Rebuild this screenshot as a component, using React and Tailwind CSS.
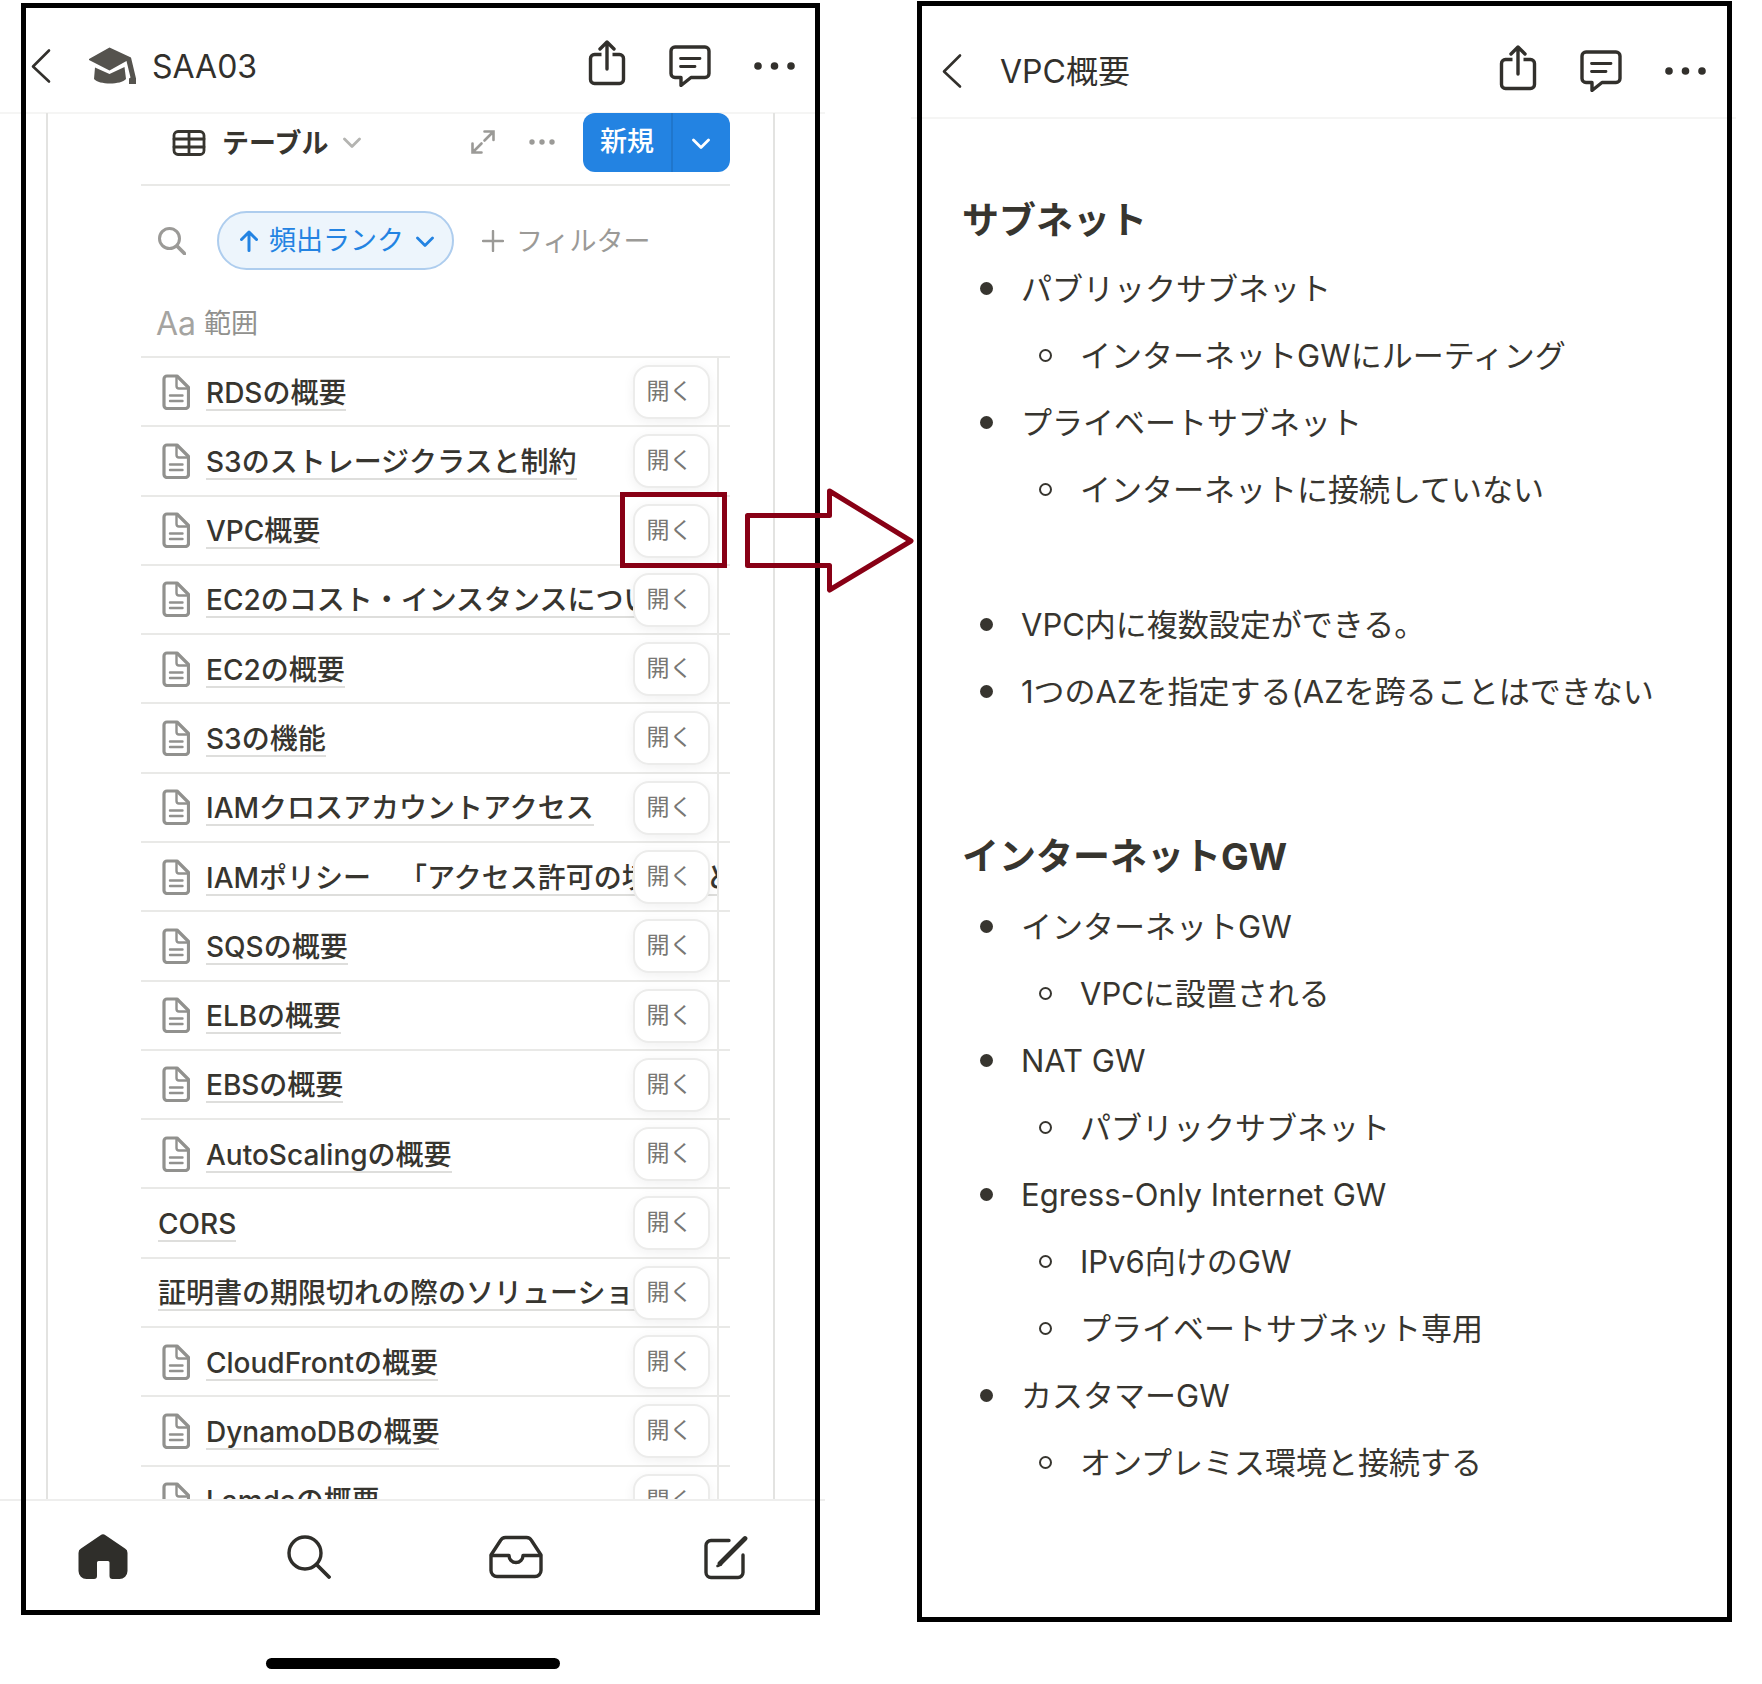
const font = "font-['Inter','Noto_Sans_CJK_JP',sans-serif]";

const rows = [
  { title: "RDSの概要" },
  { title: "S3のストレージクラスと制約" },
  { title: "VPC概要", marked: true },
  { title: "EC2のコスト・インスタンスについて" },
  { title: "EC2の概要" },
  { title: "S3の機能" },
  { title: "IAMクロスアカウントアクセス" },
  { title: "IAMポリシー　「アクセス許可の境界」とは" },
  { title: "SQSの概要" },
  { title: "ELBの概要" },
  { title: "EBSの概要" },
  { title: "AutoScalingの概要" },
  { title: "CORS", plain: true },
  { title: "証明書の期限切れの際のソリューション", plain: true },
  { title: "CloudFrontの概要" },
  { title: "DynamoDBの概要" },
  { title: "Lamdaの概要" },
];

const subnet = [
  { text: "パブリックサブネット", children: ["インターネットGWにルーティング"] },
  { text: "プライベートサブネット", children: ["インターネットに接続していない"] },
];

const subnetNotes = [
  { text: "VPC内に複数設定ができる。" },
  { text: "1つのAZを指定する(AZを跨ることはできない" },
];

const gateways = [
  { text: "インターネットGW", children: ["VPCに設置される"] },
  { text: "NAT GW", children: ["パブリックサブネット"] },
  { text: "Egress-Only Internet GW", children: ["IPv6向けのGW", "プライベートサブネット専用"] },
  { text: "カスタマーGW", children: ["オンプレミス環境と接続する"] },
];

const line = {
  fill: "none",
  stroke: "currentColor",
  strokeLinecap: "round",
  strokeLinejoin: "round",
};

function BackIcon() {
  return (
    <svg width="20" height="36" viewBox="0 0 20 36" strokeWidth="2.6" {...line}>
      <path d="M18 2.500L2 18.500l16 15" />
    </svg>
  );
}

function CapIcon() {
  return (
    <svg width="48" height="38" viewBox="0 0 48 38" fill="#55534e">
      <path d="M20.500 0.500L42 10.500 47 31.500V37H40V31.500L41.500 30.500 37.500 14 20.500 23.500 0 13V12z" />
      <path d="M6 20.500L20.500 27 35.500 20 37 32C32 38 10 38 5 32z" />
    </svg>
  );
}

function ShareIcon() {
  return (
    <svg width="38" height="46" viewBox="0 0 38 46" strokeWidth="3.4" {...line}>
      <path d="M13.500 14.500H6.500a4 4 0 0 0-4 4V39.500a4 4 0 0 0 4 4h25a4 4 0 0 0 4-4V18.500a4 4 0 0 0-4-4H24.500" strokeLinecap="butt" />
      <path d="M19 29V2.500M12 9l7-7 7 7" />
    </svg>
  );
}

function CommentIcon() {
  return (
    <svg width="42" height="42" viewBox="0 0 42 42" strokeWidth="3.4" {...line}>
      <path d="M6 2H36a4 4 0 0 1 4 4V28.500a4 4 0 0 1-4 4H22l-10 8V32.500H6a4 4 0 0 1-4-4V6a4 4 0 0 1 4-4z" />
      <path d="M11.500 13.500h19.500M11.500 21.500h14.500" strokeWidth="2.8" />
    </svg>
  );
}

function DotsIcon() {
  return (
    <svg width="42" height="8" viewBox="0 0 42 8" fill="currentColor">
      <circle cx="4" cy="4" r="3.8" />
      <circle cx="20.500" cy="4" r="3.8" />
      <circle cx="37" cy="4" r="3.8" />
    </svg>
  );
}

function TableIcon() {
  return (
    <svg width="34" height="26" viewBox="0 0 34 26" strokeWidth="2.8" {...line}>
      <rect x="2" y="1.500" width="30" height="23" rx="4" />
      <path d="M2 9h30M2 17h30M17 2v22" />
    </svg>
  );
}

function ChevronDown() {
  return (
    <svg width="18" height="12" viewBox="0 0 18 12" strokeWidth="2.8" {...line}>
      <path d="M1.500 2L9 9.500 16.500 2" />
    </svg>
  );
}

function ExpandIcon() {
  return (
    <svg width="24" height="24" viewBox="0 0 24 24" strokeWidth="2.6" {...line}>
      <path d="M13.500 10.500L22 2M13.500 1.500H22.500V10M10.500 13.500L2 22M1.500 13.500V22.500H10.500" strokeLinejoin="miter" />
    </svg>
  );
}

function SmallDots() {
  return (
    <svg width="26" height="6" viewBox="0 0 26 6" fill="currentColor">
      <circle cx="3" cy="3" r="2.700" />
      <circle cx="13" cy="3" r="2.700" />
      <circle cx="23" cy="3" r="2.700" />
    </svg>
  );
}

function ThinSearch() {
  return (
    <svg width="28" height="28" viewBox="0 0 28 28" strokeWidth="3" {...line}>
      <circle cx="11.500" cy="11.500" r="10" />
      <path d="M19 19l7.500 7.500" strokeWidth="3.8" />
    </svg>
  );
}

function ArrowUp() {
  return (
    <svg width="18" height="22" viewBox="0 0 18 22" strokeWidth="3" {...line}>
      <path d="M9 20.500V2M1.500 9.500L9 2l7.500 7.500" />
    </svg>
  );
}

function PlusIcon() {
  return (
    <svg width="22" height="22" viewBox="0 0 22 22" strokeWidth="2.4" {...line}>
      <path d="M11 1v20M1 11h20" />
    </svg>
  );
}

function PageIcon() {
  return (
    <svg className="shrink-0 text-[#91918e]" width="28" height="36" viewBox="0 0 28 36" strokeWidth="3.2" {...line}>
      <path d="M5 2H15L26.500 13.500V31.500a3 3 0 0 1-3 3H5a3 3 0 0 1-3-3V5a3 3 0 0 1 3-3z" />
      <path d="M14.500 2.500V12a2.500 2.500 0 0 0 2.500 2.500h9M8 21.500h12.500M8 27h12.500" strokeWidth="2.4" />
    </svg>
  );
}

function HomeIcon() {
  return (
    <svg width="50" height="48" viewBox="0 0 50 48" fill="currentColor">
      <path d="M22.500 2.200a4 4 0 0 1 5 0L47 15.500a5 5 0 0 1 2.500 4.500V38a8 8 0 0 1-8 8H34.500a3 3 0 0 1-3-3V29.500a1.500 1.500 0 0 0-1.500-1.500H20.500a1.500 1.500 0 0 0-1.500 1.500V43a3 3 0 0 1-3 3H8.500a8 8 0 0 1-8-8V20a5 5 0 0 1 2.500-4.500z" />
    </svg>
  );
}

function SearchIcon() {
  return (
    <svg width="44" height="44" viewBox="0 0 44 44" strokeWidth="3.4" {...line}>
      <circle cx="18" cy="18" r="16" />
      <path d="M29.500 29.500L42 42" strokeWidth="3.8" />
    </svg>
  );
}

function InboxIcon() {
  return (
    <svg width="54" height="44" viewBox="0 0 54 44" strokeWidth="3.4" {...line}>
      <path d="M2 20L11.500 5.500a6 6 0 0 1 5-3H37.500a6 6 0 0 1 5 3L52 20V35.500a6 6 0 0 1-6 6H8a6 6 0 0 1-6-6z" />
      <path d="M2.500 20.500H20a7 7 0 0 0 14 0H51.500" />
    </svg>
  );
}

function ComposeIcon() {
  return (
    <svg width="52" height="46" viewBox="0 0 52 46" strokeWidth="3.4" {...line}>
      <path d="M33 6.500H15a5 5 0 0 0-5 5V38.500a5 5 0 0 0 5 5H42a5 5 0 0 0 5-5V21" />
      <path d="M24 29.500L49 4.500" strokeWidth="4.8" />
      <path d="M21.500 32L25 30.500" strokeWidth="2.600" />
    </svg>
  );
}

function Header({ title, icon, className }) {
  return (
    <header className={`border-b-2 border-[#f5f5f4] ${className}`}>
      <div className="flex h-[92px] items-center pr-[29px] pl-[31px] text-[#32302c]">
        <button aria-label="戻る" className="mr-[38px]">
          <BackIcon />
        </button>
        {icon}
        <h1 className="pt-0.5 text-[32px] leading-10">{title}</h1>
        <div className="ml-auto flex items-center">
          <button aria-label="共有" className="mr-[43px] mb-1.5">
            <ShareIcon />
          </button>
          <button aria-label="コメント" className="mr-[43px]">
            <CommentIcon />
          </button>
          <button aria-label="その他">
            <DotsIcon />
          </button>
        </div>
      </div>
    </header>
  );
}

function Row({ title, plain, marked }) {
  return (
    <tr>
      <td className="relative border-y-2 border-r-2 border-[#e9e9e7] p-0">
        <div className="absolute inset-0 flex items-center gap-4 overflow-hidden pl-[17px]">
          {!plain && (
            <span className="pl-1">
              <PageIcon />
            </span>
          )}
          <span className="pt-1">
            <a
              href="#"
              className="block border-b-2 border-[#dededc] text-[28px] leading-8 font-medium whitespace-nowrap [text-spacing-trim:space-all]"
            >
              {title}
            </a>
          </span>
        </div>
        <button className="absolute top-[7px] right-[7px] h-[54px] w-[77px] rounded-2xl border-2 border-[#ececeb] bg-white pr-1 pb-0.5 text-[23px] leading-8 text-[#787774] shadow-[0_3px_12px_rgba(15,15,15,0.06)]">
          開く
        </button>
        {marked && (
          <div className="pointer-events-none absolute -top-[5px] -right-[10px] z-10 h-[76px] w-[107px] border-5 border-[#880015]" />
        )}
      </td>
      <td className="w-3 border-y-2 border-[#e9e9e7] p-0" />
    </tr>
  );
}

function BulletList({ items }) {
  return (
    <ul className="text-[31px] leading-[67px]">
      {items.map((item) => (
        <li key={item.text}>
          <div className="flex items-center">
            <span className="mr-[28px] ml-[69px] size-[13px] shrink-0 rounded-full bg-[#37352f]" />
            {item.text}
          </div>
          {item.children && (
            <ul>
              {item.children.map((child) => (
                <li key={child} className="flex items-center">
                  <span className="mr-[28px] ml-[128px] size-[13px] shrink-0 rounded-full border-2 border-[#37352f]" />
                  {child}
                </li>
              ))}
            </ul>
          )}
        </li>
      ))}
    </ul>
  );
}

function DatabaseScreen() {
  return (
    <section className="relative">
      <Header
        title="SAA03"
        className="pt-5"
        icon={
          <span className="mr-[15px]">
            <CapIcon />
          </span>
        }
      />
      <div className="-mt-[1px] mr-[50px] ml-[46px] h-[1386px] overflow-hidden border-x-2 border-[#e3e3e1] pr-[43px] pl-[93px]">
        <div className="flex h-[73px] items-start border-b-2 border-[#e9e9e7]">
          <button className="flex h-[60px] items-center pl-[31px] text-[27px] font-bold">
            <TableIcon />
            <span className="mr-[15px] ml-4 pt-[3px]">テーブル</span>
            <span className="text-[#b4b4b1]">
              <ChevronDown />
            </span>
          </button>
          <div className="ml-auto flex h-[58px] items-center text-[#9b9a97]">
            <button aria-label="展開" className="mr-[34px]">
              <ExpandIcon />
            </button>
            <button aria-label="オプション" className="mr-7">
              <SmallDots />
            </button>
            <div className="flex h-[59px] overflow-hidden rounded-xl bg-[#2383e2] text-white">
              <button className="w-[90px] border-r-2 border-[#1f76cc] text-[27px] font-medium">新規</button>
              <button aria-label="新規メニュー" className="flex w-[57px] items-center justify-center pt-1 pr-0.5">
                <ChevronDown />
              </button>
            </div>
          </div>
        </div>
        <div className="flex items-center pt-[25px] text-[27px] text-[#9b9a97]">
          <button aria-label="検索" className="mr-[31px] ml-[17px]">
            <ThinSearch />
          </button>
          <button className="mr-7 flex h-[59px] items-center rounded-full border-2 border-[#aecdee] bg-[#edf5fc] pr-[18px] pl-[21px] text-[#2383e2]">
            <ArrowUp />
            <span className="mr-3 ml-[11px] pt-0.5">頻出ランク</span>
            <span className="pt-0.5">
              <ChevronDown />
            </span>
          </button>
          <button className="flex items-center">
            <PlusIcon />
            <span className="ml-3 pt-[3px]">フィルター</span>
          </button>
        </div>
        <table className="h-[1266px] w-full table-fixed border-collapse">
          <colgroup>
            <col />
            <col className="w-3" />
          </colgroup>
          <thead>
            <tr>
              <th colSpan={2} className="h-[87px] pt-[22px] pr-0 pb-0 pl-[15px] text-left font-normal">
                <span className="flex items-center gap-2 text-[27px] leading-8 text-[#91918e]">
                  <span className="text-[32px] text-[#a5a4a1]">Aa</span>
                  範囲
                </span>
              </th>
            </tr>
          </thead>
          <tbody>
            {rows.map((row) => (
              <Row key={row.title} {...row} />
            ))}
          </tbody>
        </table>
      </div>
      <nav className="grid h-[114px] grid-cols-4 items-center justify-items-center border-t-2 border-[#eeeeed] text-[#2f2e2a]">
        <button aria-label="ホーム">
          <HomeIcon />
        </button>
        <button aria-label="検索">
          <SearchIcon />
        </button>
        <button aria-label="受信トレイ">
          <InboxIcon />
        </button>
        <button aria-label="新規ページ">
          <ComposeIcon />
        </button>
      </nav>
      <div className="mx-auto mt-[45px] h-[11px] w-[294px] rounded-full bg-black" />
      <div className="pointer-events-none absolute top-[3px] right-[5px] bottom-[54px] left-[21px] border-5 border-black" />
    </section>
  );
}

function NoteScreen() {
  return (
    <section className="relative">
      <Header title="VPC概要" className="pt-[25px]" />
      <article>
        <h2 className="mt-[77px] pl-[51px] text-[37px] leading-[50px] font-bold">サブネット</h2>
        <div className="mt-[9px]">
          <BulletList items={subnet} />
        </div>
        <div className="mt-[68px]">
          <BulletList items={subnetNotes} />
        </div>
        <h2 className="mt-[107px] pl-[51px] text-[37px] leading-[50px] font-bold">インターネットGW</h2>
        <div className="mt-[11px] pb-[126px]">
          <BulletList items={gateways} />
        </div>
      </article>
      <div className="pointer-events-none absolute top-[1px] right-[4px] bottom-0 left-[6px] border-5 border-black" />
    </section>
  );
}

export default function App() {
  return (
    <main lang="ja" className={`relative grid min-h-screen grid-cols-2 items-start gap-[86px] bg-white pr-[26px] text-[#37352f] ${font}`}>
      <DatabaseScreen />
      <NoteScreen />
      <svg
        className="pointer-events-none absolute top-[486px] right-[calc(50%-34px)]"
        width="172"
        height="108"
        viewBox="0 0 172 108"
        fill="none"
        stroke="#880015"
        strokeWidth="5"
      >
        <path d="M4.500 29.500H86.500V5L168 55 86.500 104V79.500H4.500z" strokeLinejoin="round" />
      </svg>
    </main>
  );
}
